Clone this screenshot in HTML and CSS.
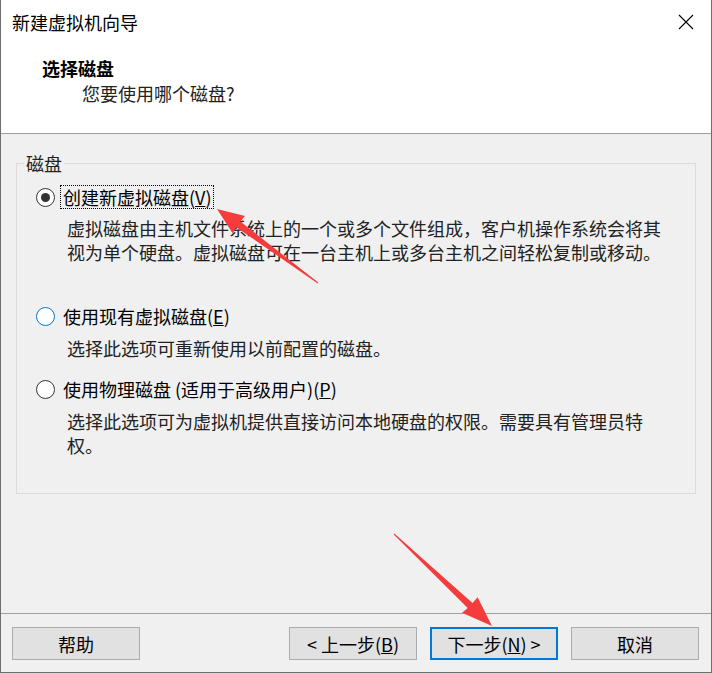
FILE: index.html
```html
<!DOCTYPE html>
<html lang="zh-CN">
<head>
<meta charset="utf-8">
<title>新建虚拟机向导</title>
<link rel="stylesheet" href="styles.css">
</head>
<body>
<div class="window">
  <header class="header">
    <div class="titlebar">
      <span class="title">新建虚拟机向导</span>
      <svg class="close" width="16" height="16" viewBox="0 0 16 16"><path d="M1 1L15 15M15 1L1 15" stroke="#000" stroke-width="1.1" fill="none"/></svg>
    </div>
    <h1 class="page-title">选择磁盘</h1>
    <p class="page-sub">您要使用哪个磁盘?</p>
  </header>
  <main class="main">
    <fieldset class="group">
      <legend class="legend">磁盘</legend>
      <div class="option first">
        <span class="radio checked"><span class="dot"></span></span>
        <span class="label focus">创建新虚拟磁盘(<u>V</u>)</span>
      </div>
      <p class="desc d1">虚拟磁盘由主机文件系统上的一个或多个文件组成，客户机操作系统会将其视为单个硬盘。虚拟磁盘可在一台主机上或多台主机之间轻松复制或移动。</p>
      <div class="option second">
        <span class="radio hover"></span>
        <span class="label">使用现有虚拟磁盘(<u>E</u>)</span>
      </div>
      <p class="desc d2">选择此选项可重新使用以前配置的磁盘。</p>
      <div class="option third">
        <span class="radio"></span>
        <span class="label">使用物理磁盘 (适用于高级用户)(<u>P</u>)</span>
      </div>
      <p class="desc d3">选择此选项可为虚拟机提供直接访问本地硬盘的权限。需要具有管理员特权。</p>
    </fieldset>
  </main>
  <footer class="footer">
    <button class="btn">帮助</button>
    <span class="spacer"></span>
    <button class="btn">&lt; 上一步(<u>B</u>)</button>
    <button class="btn primary">下一步(<u>N</u>) &gt;</button>
    <button class="btn">取消</button>
  </footer>
  <svg class="arrows" width="712" height="673" viewBox="0 0 712 673">
    <polygon fill="#f43c3c" points="217,209 244.9,215.9 240.4,221.6 318.3,282.6 317.7,283.4 236.2,227.2 232.8,233.6"/>
    <polygon fill="#f43c3c" points="492,626 462.1,612.8 467.7,608.1 393.7,534.4 394.3,533.6 472.5,603 477.6,597.2"/>
  </svg>
</div>
</body>
</html>
```
FILE: styles.css
```css
* { box-sizing: border-box; }
html, body { margin: 0; padding: 0; background: #f0f0f0; }
body {
  font-family: "Noto Sans CJK SC", "Noto Sans", sans-serif;
  font-size: 18px;
  color: #000;
}
.window {
  position: relative;
  width: 712px;
  height: 673px;
  border-left: 1px solid #6e6e6e;
  border-right: 1px solid #6e6e6e;
  border-bottom: 1px solid #6e6e6e;
  display: flex;
  flex-direction: column;
  background: #f0f0f0;
}
.header {
  height: 134px;
  background: #fff;
  border-bottom: 1px solid #a0a0a0;
  flex: none;
}
.titlebar {
  height: 44px;
  display: flex;
  align-items: center;
  justify-content: space-between;
  padding-left: 11px;
  padding-right: 17px;
}
.title { line-height: 24px; font-size: 18px; }
.close { display: block; }
.page-title {
  margin: 12px 0 0 41px;
  font-size: 18px;
  font-weight: bold;
  line-height: 24px;
}
.page-sub {
  margin: 1px 0 0 81px;
  line-height: 24px;
  color: #222;
}
.main {
  flex: 1;
  padding-top: 19px;
}
.group {
  margin: 0 15px;
  padding: 0 0 36px 0;
  border: 1px solid #dcdcdc;
  min-width: 0;
}
.legend {
  margin-left: 7px;
  padding: 0 2px;
  line-height: 20px;
  color: #222;
}
.option {
  display: flex;
  align-items: center;
  height: 24px;
  padding-left: 19px;
}
.option.first { margin-top: 12px; }
.option.second { margin-top: 40px; }
.option.third { margin-top: 17px; }
.radio {
  width: 19px;
  height: 19px;
  border: 1px solid #333;
  border-radius: 50%;
  background: #fff;
  display: flex;
  align-items: center;
  justify-content: center;
  flex: none;
}
.radio.hover { border-color: #0078d7; }
.dot {
  width: 9px;
  height: 9px;
  border-radius: 50%;
  background: #333;
}
.label {
  margin-left: 5px;
  padding: 0 1px 0 2px;
  line-height: 22px;
  border: 1px dotted transparent;
}
.label.focus { border-color: #000; }
.desc {
  margin: 0 0 0 50px;
  max-width: 600px;
  line-height: 24px;
  color: #222;
}
.desc.d1 { margin-top: 7px; }
.desc.d2 { margin-top: 8px; }
.desc.d3 { margin-top: 8px; }
.footer {
  flex: none;
  height: 59px;
  border-top: 1px solid #a0a0a0;
  padding: 13px 12px 0 11px;
  display: flex;
  align-items: flex-start;
  gap: 13px;
}
.spacer { flex: 1; }
.btn {
  width: 128px;
  height: 33px;
  background: #e1e1e1;
  border: 1px solid #adadad;
  font-family: inherit;
  font-size: 18px;
  color: #000;
  padding: 0;
  line-height: 24px;
}
.btn.primary { border: 2px solid #0078d7; }
.arrows {
  position: absolute;
  left: -1px;
  top: 0;
  pointer-events: none;
}
```
